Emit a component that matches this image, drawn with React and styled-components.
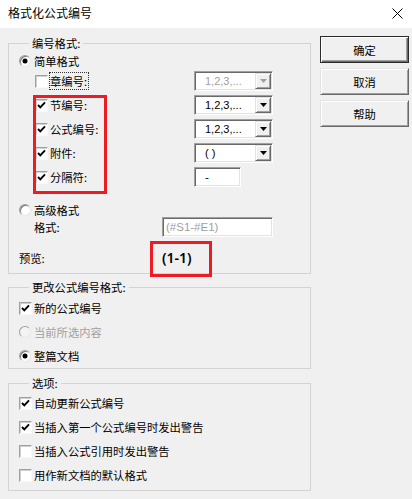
import React from "react";
import styled, { createGlobalStyle, css } from "styled-components";

const GlobalStyle = createGlobalStyle`
  html, body { margin: 0; padding: 0; background: #f0f0f0; }
  body {
    font-family: "Noto Sans CJK SC", "Noto Sans", sans-serif;
    font-size: 11.3px;
    color: #000;
  }
  * { box-sizing: border-box; }
`;

const Window = styled.div`
  width: 412px;
  height: 499px;
  background: #f0f0f0;
  display: flex;
  flex-direction: column;
  overflow: hidden;
`;

const TitleBar = styled.div`
  height: 28px;
  flex: none;
  background: #fff;
  display: flex;
  align-items: center;
  justify-content: space-between;
  padding: 0 9px 2px 8px;
`;

const Title = styled.span`
  font-size: 12px;
  line-height: 16px;
`;

const Body = styled.div`
  display: flex;
  gap: 9px;
  padding: 7px 3px 0 8px;
`;

const LeftCol = styled.div`
  width: 303px;
  display: flex;
  flex-direction: column;
`;

const Group = styled.fieldset`
  margin: ${(p) => p.$mt || 0}px 0 0 0;
  padding: ${(p) => p.$pad};
  border: 1px solid #d3d3d3;
  min-width: 0;
  position: relative;
`;

const Legend = styled.legend`
  margin-left: 10px;
  padding: 0 3px;
  line-height: 16px;
  font-size: 11.3px;
`;

const RadioRow = styled.div`
  display: flex;
  align-items: center;
  height: ${(p) => p.$h || 16}px;
  margin-top: ${(p) => p.$mt || 0}px;
  color: ${(p) => (p.$disabled ? "#a0a0a0" : "#000")};
`;

const RadioDot = styled.span`
  width: 12px;
  height: 12px;
  flex: none;
  border-radius: 50%;
  border: 1px solid;
  border-color: #a0a0a0 #e8e8e8 #e8e8e8 #a0a0a0;
  background: ${(p) => (p.$disabled ? "#f4f4f4" : "#fff")};
  box-shadow: ${(p) => (p.$disabled ? "none" : "inset 1px 1px 0 #7a7a7a")};
  position: relative;
  margin-right: 3px;
  ${(p) =>
    p.$checked &&
    css`
      &::after {
        content: "";
        position: absolute;
        left: 3px;
        top: 3px;
        width: 4px;
        height: 4px;
        border-radius: 50%;
        background: #000;
        box-shadow: 0 0 0 0.5px #000;
      }
    `}
`;

const CheckBox = styled.span`
  width: 13px;
  height: 13px;
  flex: none;
  background: #fff;
  border: 1px solid;
  border-color: #a0a0a0 #f8f8f8 #f8f8f8 #a0a0a0;
  box-shadow: inset 1px 1px 0 #d0d0d0;
  display: flex;
  align-items: center;
  justify-content: center;
  margin-right: ${(p) => p.$gap ?? 2}px;
`;

const CheckMark = () => (
  <svg width="9" height="9" viewBox="0 0 9 9">
    <path d="M1 4 L3.3 6.4 L8 1.4" fill="none" stroke="#000" strokeWidth="1.9" />
  </svg>
);

const Check = ({ checked, gap }) => (
  <CheckBox $gap={gap}>{checked ? <CheckMark /> : null}</CheckBox>
);

const OptionList = styled.div`
  position: relative;
  margin-top: 2px;
  display: flex;
  flex-direction: column;
  gap: 4px;
`;

const OptionRow = styled.div`
  display: grid;
  grid-template-columns: 159px auto;
  align-items: center;
  height: 20px;
  padding-left: 16px;
`;

const OptionLabel = styled.div`
  display: flex;
  align-items: center;
`;

const LabelText = styled.span`
  line-height: 16px;
  border: 1px dotted ${(p) => (p.$focus ? "#333" : "transparent")};
  padding: 0 1px 0 0;
  margin-left: -1px;
`;

const sunken = css`
  border: 1px solid;
  border-color: #a0a0a0 #ffffff #ffffff #a0a0a0;
  box-shadow: inset 1px 1px 0 #696969, inset -1px -1px 0 #e3e3e3;
  background: #fff;
`;

const Combo = styled.div`
  ${sunken};
  width: 79px;
  height: 20px;
  padding: 1px;
  display: flex;
  align-items: center;
  color: ${(p) => (p.$disabled ? "#a0a0a0" : "#000")};
`;

const ComboValue = styled.span`
  flex: 1;
  padding-left: 9px;
  font-family: "Liberation Sans", Arial, sans-serif;
  font-size: 11px;
  line-height: 14px;
`;

const ArrowBtn = styled.span`
  width: 16px;
  height: 16px;
  background: #f0f0f0;
  border: 1px solid;
  border-color: #e3e3e3 #696969 #696969 #e3e3e3;
  box-shadow: inset 1px 1px 0 #fff, inset -1px -1px 0 #a0a0a0;
  display: flex;
  align-items: center;
  justify-content: center;
`;

const Arrow = ({ disabled }) => (
  <svg width="7" height="4" viewBox="0 0 7 4">
    <path d="M0 0 H7 L3.5 4 Z" fill={disabled ? "#a0a0a0" : "#000"} />
  </svg>
);

const TextBox = styled.div`
  ${sunken};
  width: ${(p) => p.$w}px;
  height: 20px;
  display: flex;
  align-items: center;
  padding-left: ${(p) => p.$pl || 3}px;
  font-family: "Liberation Sans", Arial, sans-serif;
  font-size: 11.5px;
  color: ${(p) => (p.$disabled ? "#a0a0a0" : "#000")};
`;

const Highlight = styled.div`
  position: absolute;
  border: 3px solid #ec1c24;
  left: ${(p) => p.$l}px;
  top: ${(p) => p.$t}px;
  width: ${(p) => p.$w}px;
  height: ${(p) => p.$h}px;
  pointer-events: none;
`;

const FieldRow = styled.div`
  display: grid;
  grid-template-columns: ${(p) => p.$col}px auto;
  align-items: center;
  height: 20px;
  margin-top: ${(p) => p.$mt || 0}px;
  padding-left: ${(p) => p.$pl || 0}px;
`;

const PreviewValue = styled.span`
  position: relative;
  font-family: "Noto Sans", sans-serif;
  font-weight: 600;
  font-size: 14px;
  line-height: 20px;
  justify-self: start;
`;

const ItemRow = styled.div`
  display: flex;
  align-items: center;
  height: 24px;
  color: ${(p) => (p.$disabled ? "#a0a0a0" : "#000")};
`;

const RightCol = styled.div`
  width: 89px;
  display: flex;
  flex-direction: column;
  gap: 5px;
  margin-top: 1px;
`;

const Button = styled.button`
  height: 27px;
  width: 100%;
  font-family: "Noto Sans CJK SC", sans-serif;
  font-size: 11.3px;
  color: #000;
  background: #f0f0f0;
  padding: 0;
  border: 1px solid;
  border-color: #e3e3e3 #696969 #696969 #e3e3e3;
  box-shadow: inset 1px 1px 0 #fff, inset -1px -1px 0 #a0a0a0;
  ${(p) =>
    p.$default &&
    css`
      border-color: #2b2b2b;
      box-shadow: inset 1px 1px 0 #fff, inset -1px -1px 0 #696969,
        inset -2px -2px 0 #a0a0a0;
    `}
`;

const CloseIcon = () => (
  <svg width="11" height="11" viewBox="0 0 11 11">
    <path d="M0.5 0.5 L10.5 10.5 M10.5 0.5 L0.5 10.5" stroke="#000" strokeWidth="1" />
  </svg>
);

const numberOptions = [
  { label: "节编号:", value: "1,2,3,..." },
  { label: "公式编号:", value: "1,2,3,..." },
  { label: "附件:", value: "( )" },
];

export default function App() {
  return (
    <Window>
      <GlobalStyle />
      <TitleBar>
        <Title>格式化公式编号</Title>
        <CloseIcon />
      </TitleBar>
      <Body>
        <LeftCol>
          <Group $pad="0 0 5px 10px">
            <Legend>编号格式:</Legend>
            <RadioRow $mt={2}>
              <RadioDot $checked />
              简单格式
            </RadioRow>
            <OptionList>
              <OptionRow>
                <OptionLabel>
                  <Check gap={2} />
                  <LabelText $focus>章编号:</LabelText>
                </OptionLabel>
                <Combo $disabled>
                  <ComboValue>1,2,3,...</ComboValue>
                  <ArrowBtn>
                    <Arrow disabled />
                  </ArrowBtn>
                </Combo>
              </OptionRow>
              {numberOptions.map((o) => (
                <OptionRow key={o.label}>
                  <OptionLabel>
                    <Check checked gap={2} />
                    <LabelText>{o.label}</LabelText>
                  </OptionLabel>
                  <Combo>
                    <ComboValue>{o.value}</ComboValue>
                    <ArrowBtn>
                      <Arrow />
                    </ArrowBtn>
                  </Combo>
                </OptionRow>
              ))}
              <OptionRow>
                <OptionLabel>
                  <Check checked gap={2} />
                  <LabelText>分隔符:</LabelText>
                </OptionLabel>
                <TextBox $w={47} $pl={10}>-</TextBox>
              </OptionRow>
              <Highlight $l={14} $t={24} $w={74} $h={99} />
            </OptionList>
            <RadioRow $mt={15}>
              <RadioDot />
              高级格式
            </RadioRow>
            <FieldRow $col={128} $pl={15} $mt={-1}>
              <span>格式:</span>
              <TextBox $w={111} $disabled>
                (#S1-#E1)
              </TextBox>
            </FieldRow>
            <FieldRow $col={143} $mt={11} $pl={0}>
              <span>预览:</span>
              <PreviewValue>
                (1-1)
                <Highlight $l={-12} $t={-7} $w={62} $h={36} />
              </PreviewValue>
            </FieldRow>
          </Group>

          <Group $mt={5} $pad="1px 0 0 10px">
            <Legend>更改公式编号格式:</Legend>
            <ItemRow>
              <Check checked gap={2} />
              新的公式编号
            </ItemRow>
            <ItemRow $disabled>
              <RadioDot $disabled />
              当前所选内容
            </ItemRow>
            <ItemRow>
              <RadioDot $checked />
              整篇文档
            </ItemRow>
          </Group>

          <Group $mt={6} $pad="0 0 3px 10px">
            <Legend>选项:</Legend>
            <ItemRow>
              <Check checked gap={2} />
              自动更新公式编号
            </ItemRow>
            <ItemRow>
              <Check checked gap={2} />
              当插入第一个公式编号时发出警告
            </ItemRow>
            <ItemRow>
              <Check gap={2} />
              当插入公式引用时发出警告
            </ItemRow>
            <ItemRow>
              <Check gap={2} />
              用作新文档的默认格式
            </ItemRow>
          </Group>
        </LeftCol>
        <RightCol>
          <Button $default>确定</Button>
          <Button>取消</Button>
          <Button>帮助</Button>
        </RightCol>
      </Body>
    </Window>
  );
}
